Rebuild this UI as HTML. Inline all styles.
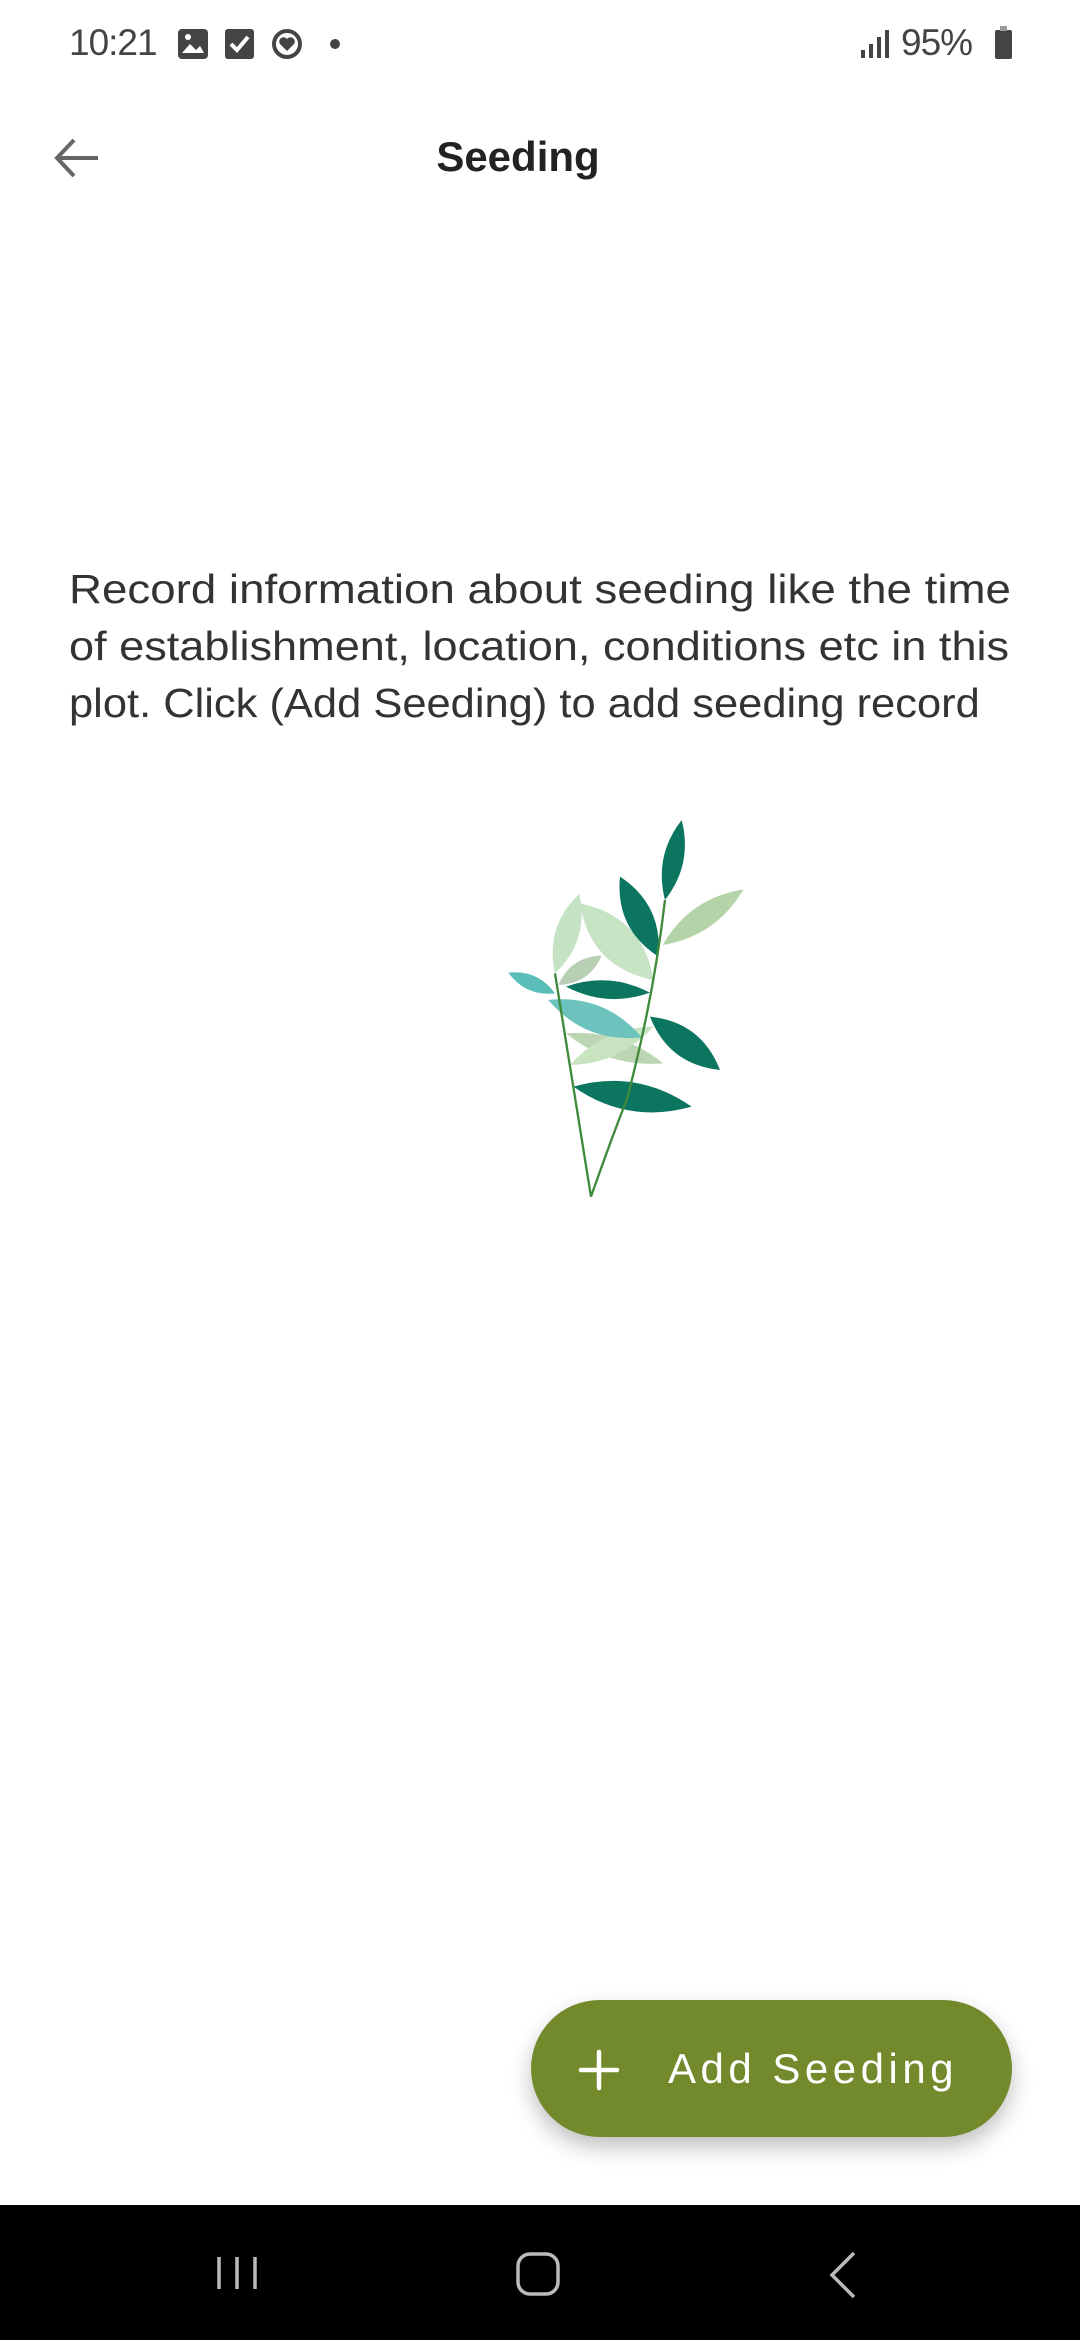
<!DOCTYPE html>
<html><head><meta charset="utf-8"><style>
html,body{margin:0;padding:0;width:1080px;height:2340px;background:#fff;overflow:hidden;font-family:"Liberation Sans",sans-serif;position:relative}
.abs{position:absolute}
.line{position:absolute;left:69px;font-size:41px;color:#333;white-space:nowrap;transform:scaleX(1.095);transform-origin:0 0}
</style></head><body>
<div class="abs" style="left:69px;top:22px;font-size:37px;color:#444;letter-spacing:-1px">10:21</div>
<svg class="abs" style="left:175px;top:26px" width="170" height="40" viewBox="0 0 170 40">
<rect x="3" y="3" width="30" height="30" rx="4" fill="#444"/><path d="M7 27 L15 18 L21 24 L25 20 L29 27Z" fill="#fff"/><circle cx="13" cy="11" r="3" fill="#fff"/>
<rect x="50" y="3" width="29" height="30" rx="3" fill="#444"/><path d="M56 18 L62 24 L73 11" stroke="#fff" stroke-width="4" fill="none"/>
<circle cx="112" cy="18" r="13" stroke="#444" stroke-width="4" fill="none"/><path d="M112 25 L105 18 A4 4 0 0 1 112 13 A4 4 0 0 1 119 18Z" fill="#444"/>
<circle cx="160" cy="18" r="5" fill="#444"/>
</svg>
<svg class="abs" style="left:860px;top:28px" width="40" height="32"><rect x="1" y="22" width="4" height="8" fill="#444"/><rect x="9" y="16" width="4" height="14" fill="#444"/><rect x="17" y="9" width="4" height="21" fill="#444"/><rect x="25" y="2" width="4" height="28" fill="#444"/></svg>
<div class="abs" style="left:901px;top:22px;font-size:37px;color:#444;letter-spacing:-1px">95%</div>
<div class="abs" style="left:995px;top:30px;width:17px;height:29px;background:#444;border-radius:2px"></div>
<div class="abs" style="left:1000px;top:26px;width:7px;height:5px;background:#999"></div>
<svg class="abs" style="left:52px;top:134px" width="56" height="48"><path d="M46 24 H6 M22 6 L5 24 L22 42" stroke="#666" stroke-width="4" fill="none"/></svg>
<div class="abs" style="left:0;width:1036px;top:133px;text-align:center;font-size:42px;font-weight:bold;color:#222">Seeding</div>
<div class="line" style="top:566px;transform:scaleX(1.114)">Record information about seeding like the time</div>
<div class="line" style="top:623px;transform:scaleX(1.1)">of establishment, location, conditions etc in this</div>
<div class="line" style="top:680px;transform:scaleX(1.06)">plot. Click (Add Seeding) to add seeding record</div>
<svg class="abs" style="left:480px;top:800px" width="300" height="410" viewBox="0 0 900 1230">
<path d="M548 435 Q709 408 790 268 Q629 294 548 435Z" fill="#b5d3a9"/>
<path d="M520 540 Q490 349 300 310 Q330 501 520 540Z" fill="#c6e3c4"/>
<path d="M225 520 Q328 422 298 282 Q194 380 225 520Z" fill="#c5e2c4"/>
<path d="M235 555 Q328 552 365 467 Q272 470 235 555Z" fill="#b9cfb4"/>
<path d="M555 300 Q639 192 605 60 Q521 168 555 300Z" fill="#0b7560"/>
<path d="M535 470 Q549 315 420 230 Q405 385 535 470Z" fill="#0b7560"/>
<path d="M225 580 Q173 508 85 518 Q137 590 225 580Z" fill="#5bbdb8"/>
<path d="M258 560 Q380 624 510 578 Q388 514 258 560Z" fill="#0b7560"/>
<path d="M258 700 Q386 803 550 790 Q422 687 258 700Z" fill="#bcd6b3"/>
<path d="M270 795 Q420 792 520 680 Q370 682 270 795Z" fill="#c7e3c0"/>
<path d="M205 600 Q315 730 485 712 Q375 582 205 600Z" fill="#6cc3bd"/>
<path d="M510 650 Q566 794 720 810 Q664 666 510 650Z" fill="#0b7560"/>
<path d="M280 860 Q443 974 635 920 Q471 806 280 860Z" fill="#0b7560"/>
<path d="M225 520 L333 1190 Q400 1000 440 900 Q520 600 555 300" stroke="#3f8a3a" stroke-width="7" fill="none"/>
</svg>
<div class="abs" style="left:531px;top:2000px;width:481px;height:137px;border-radius:69px;background:#72892c;box-shadow:0 10px 22px rgba(0,0,0,0.25)"></div>
<svg class="abs" style="left:578px;top:2049px" width="42" height="42"><path d="M21 3 V39 M3 21 H39" stroke="#fff" stroke-width="4.5" stroke-linecap="round"/></svg>
<div class="abs" style="left:668px;top:2045px;font-size:42px;color:#fff;letter-spacing:4.5px;white-space:nowrap">Add Seeding</div>
<div class="abs" style="left:0;top:2205px;width:1080px;height:135px;background:#000"></div>
<svg class="abs" style="left:0;top:2205px" width="1080" height="135">
<path d="M219 52 V84 M237 52 V84 M255 52 V84" stroke="#bbb" stroke-width="3.5"/>
<rect x="518" y="49" width="40" height="40" rx="12" stroke="#bbb" stroke-width="3.5" fill="none"/>
<path d="M854 48 L832 70 L854 92" stroke="#bbb" stroke-width="3.5" fill="none"/>
</svg>
</body></html>
